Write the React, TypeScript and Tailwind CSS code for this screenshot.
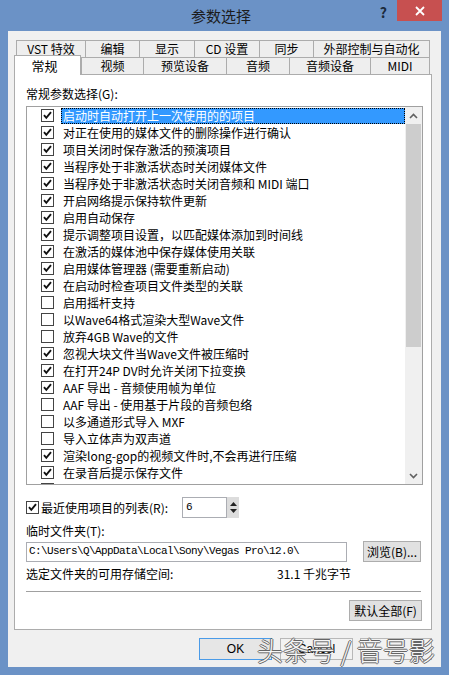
import React from "react";

const items: [string, boolean][] = [
  ["启动时自动打开上一次使用的的项目", true],
  ["对正在使用的媒体文件的删除操作进行确认", true],
  ["项目关闭时保存激活的预演项目", true],
  ["当程序处于非激活状态时关闭媒体文件", true],
  ["当程序处于非激活状态时关闭音频和 MIDI 端口", true],
  ["开启网络提示保持软件更新", true],
  ["启用自动保存", true],
  ["提示调整项目设置，以匹配媒体添加到时间线", true],
  ["在激活的媒体池中保存媒体使用关联", true],
  ["启用媒体管理器 (需要重新启动)", true],
  ["在启动时检查项目文件类型的关联", true],
  ["启用摇杆支持", false],
  ["以Wave64格式渲染大型Wave文件", false],
  ["放弃4GB Wave的文件", false],
  ["忽视大块文件当Wave文件被压缩时", true],
  ["在打开24P DV时允许关闭下拉变换", true],
  ["AAF 导出 - 音频使用帧为单位", true],
  ["AAF 导出 - 使用基于片段的音频包络", false],
  ["以多通道形式导入 MXF", false],
  ["导入立体声为双声道", false],
  ["渲染long-gop的视频文件时,不会再进行压缩", true],
  ["在录音后提示保存文件", true],
];

const tabs1: [string, string][] = [
  ["VST 特效", "w-[69px]"],
  ["编辑", "w-[54px]"],
  ["显示", "w-[55px]"],
  ["CD 设置", "w-[65px]"],
  ["同步", "w-[54px]"],
  ["外部控制与自动化", "w-[117px] border-r"],
];

const tabs2: [string, string][] = [
  ["视频", "w-[62px]"],
  ["预览设备", "w-[83px]"],
  ["音频", "w-[63px]"],
  ["音频设备", "w-[81px]"],
  ["MIDI", "w-[60px] border-r"],
];

function Check({ checked }: { checked: boolean }) {
  return (
    <span className="flex h-[13px] w-[13px] shrink-0 items-center justify-center border border-[#444] bg-white">
      {checked && (
        <svg width="11" height="11" viewBox="0 0 11 11">
          <path d="M2 5.2 L4.3 7.8 L9 2.2" fill="none" stroke="#111" strokeWidth="1.9" />
        </svg>
      )}
    </span>
  );
}

function Chevron({ up }: { up: boolean }) {
  return (
    <svg width="9" height="6" viewBox="0 0 9 6">
      <path
        d={up ? "M1 5 L4.5 1.5 L8 5" : "M1 1 L4.5 4.5 L8 1"}
        fill="none"
        stroke="#606060"
        strokeWidth="1.6"
      />
    </svg>
  );
}

export default function App() {
  return (
    <div className="relative flex h-[675px] w-[449px] flex-col overflow-hidden bg-[#6b92c6] font-['Noto_Sans_CJK_SC',sans-serif] text-[12px] text-black">
      {/* title bar */}
      <div className="flex h-[31px] shrink-0 items-start">
        <div className="flex-1" />
        <div className="text-[15px] leading-[31px] text-[#1c1c1c]">参数选择</div>
        <div className="flex flex-1 items-start justify-end pr-[7px]">
          <span className="mr-[10px] mt-[3px] text-[14px] font-bold leading-[18px] text-[#1c2a3c]">?</span>
          <div className="flex h-[21px] w-[45px] items-center justify-center bg-[#c75050]">
            <svg width="10" height="10" viewBox="0 0 10 10">
              <path d="M1 1 L9 9 M9 1 L1 9" stroke="#fff" strokeWidth="1.8" />
            </svg>
          </div>
        </div>
      </div>

      {/* client */}
      <div className="mx-[8px] mb-[8px] flex flex-1 flex-col bg-[#f0f0f0] pl-[6px] pt-[9px]">
        {/* tab row 1 */}
        <div className="ml-[2px] flex h-[17px]">
          {tabs1.map(([t, c]) => (
            <div
              key={t}
              className={`flex h-[17px] items-center justify-center border-l border-t border-[#acacac] bg-[#eeeeee] leading-none ${c}`}
            >
              {t}
            </div>
          ))}
        </div>
        {/* tab row 2 */}
        <div className="flex h-[17px] items-end">
          <div className="relative z-10 -mb-[1px] flex h-[20px] w-[67px] items-start justify-center border-l border-r border-t border-[#acacac] bg-white pr-[6px] pt-[1px] text-[13px] leading-[17px]">
            常规
          </div>
          {tabs2.map(([t, c]) => (
            <div
              key={t}
              className={`flex h-[17px] items-center justify-center border-l border-t border-[#acacac] bg-[#eeeeee] leading-none ${c}`}
            >
              {t}
            </div>
          ))}
        </div>

        {/* panel */}
        <div className="flex h-[556px] w-[418px] flex-col border border-[#acacac] bg-white pl-[11px] pt-[10px]">
          <div className="h-[17px] leading-[17px]">常规参数选择(G):</div>

          {/* list */}
          <div className="mt-[4px] flex h-[379px] w-[397px] border border-[#a0a0a0] bg-white">
            <div className="flex flex-1 flex-col overflow-hidden">
              {items.map(([t, c], i) => (
                <div key={t} className="flex h-[17px] shrink-0 items-center pl-[14px]">
                  <Check checked={c} />
                  <div
                    className={
                      i === 0
                        ? "ml-[7px] flex h-[16px] flex-1 items-center border border-dotted border-black bg-[#3399ff] px-[1px] leading-[14px] text-white"
                        : "ml-[7px] flex h-[16px] items-center px-[2px] leading-[16px]"
                    }
                  >
                    {t}
                  </div>
                </div>
              ))}
              <div className="flex h-[17px] shrink-0 items-center pl-[14px]">
                <Check checked={false} />
              </div>
            </div>
            {/* scrollbar */}
            <div className="flex w-[17px] flex-col bg-[#f0f0f0]">
              <div className="flex h-[17px] items-center justify-center">
                <Chevron up />
              </div>
              <div className="mx-[1px] h-[223px] bg-[#cdcdcd]" />
              <div className="flex-1" />
              <div className="flex h-[17px] items-center justify-center">
                <Chevron up={false} />
              </div>
            </div>
          </div>

          {/* recent list */}
          <div className="mt-[12px] flex h-[21px] items-center">
            <Check checked />
            <span className="ml-[2px] w-[141px] leading-[17px]">最近使用项目的列表(R):</span>
            <div className="flex h-[21px]">
              <div className="flex w-[45px] items-center border border-[#abadb3] bg-white pl-[3px] font-['Liberation_Mono',monospace] text-[11px]">
                6
              </div>
              <div className="flex w-[12px] flex-col items-center justify-center gap-[3px] bg-[#dcdcdc]">
                <svg width="7" height="4" viewBox="0 0 7 4">
                  <path d="M0 4 L3.5 0 L7 4 Z" fill="#222" />
                </svg>
                <svg width="7" height="4" viewBox="0 0 7 4">
                  <path d="M0 0 L3.5 4 L7 0 Z" fill="#222" />
                </svg>
              </div>
            </div>
          </div>

          <div className="mt-[4px] h-[17px] leading-[17px]">临时文件夹(T):</div>

          <div className="mt-[2px] flex h-[21px] items-center">
            <div className="flex h-[20px] w-[321px] items-center border border-[#abadb3] bg-white pl-[2px] font-['Liberation_Mono',monospace] text-[11px] tracking-[-0.6px]">
              C:\Users\Q\AppData\Local\Sony\Vegas Pro\12.0\
            </div>
            <div className="ml-[16px] flex h-[21px] w-[58px] items-center justify-center border border-[#adadad] bg-[#e1e1e1] leading-none">
              浏览(B)...
            </div>
          </div>

          <div className="mt-[3px] flex h-[17px] items-center leading-[17px]">
            <span className="w-[251px]">选定文件夹的可用存储空间:</span>
            <span>31.1 千兆字节</span>
          </div>

          <div className="mt-[9px] h-px w-[395px] bg-[#a0a0a0]" />

          <div className="mt-[8px] flex w-[396px] justify-end">
            <div className="flex h-[21px] w-[73px] items-center justify-center border border-[#adadad] bg-[#e1e1e1] leading-none">
              默认全部(F)
            </div>
          </div>
        </div>

        {/* dialog buttons */}
        <div className="mt-[8px] flex h-[22px] pl-[185px]">
          <div className="flex w-[73px] items-center justify-center border border-[#4a9be8] bg-[#e6e6e6] font-['Liberation_Sans',sans-serif] text-[12px]">
            OK
          </div>
          <div className="ml-[8px] flex w-[73px] items-center justify-center border border-[#b8b8b8] bg-[#f2f2f2] font-['Liberation_Sans',sans-serif] text-[12px]">
            Cancel
          </div>
          <div className="ml-[7px] w-[72px] border border-[#b8b8b8] bg-[#f2f2f2]" />
        </div>
      </div>

      {/* watermark */}
      <div className="absolute left-[257px] top-[637px] whitespace-nowrap text-[26px] font-light leading-none text-[#f6f6f6] [text-shadow:1px_0_0_#666,-1px_0_0_#666,0_1px_0_#666,0_-1px_0_#666]">
        头条号 / 音号影
      </div>
    </div>
  );
}
